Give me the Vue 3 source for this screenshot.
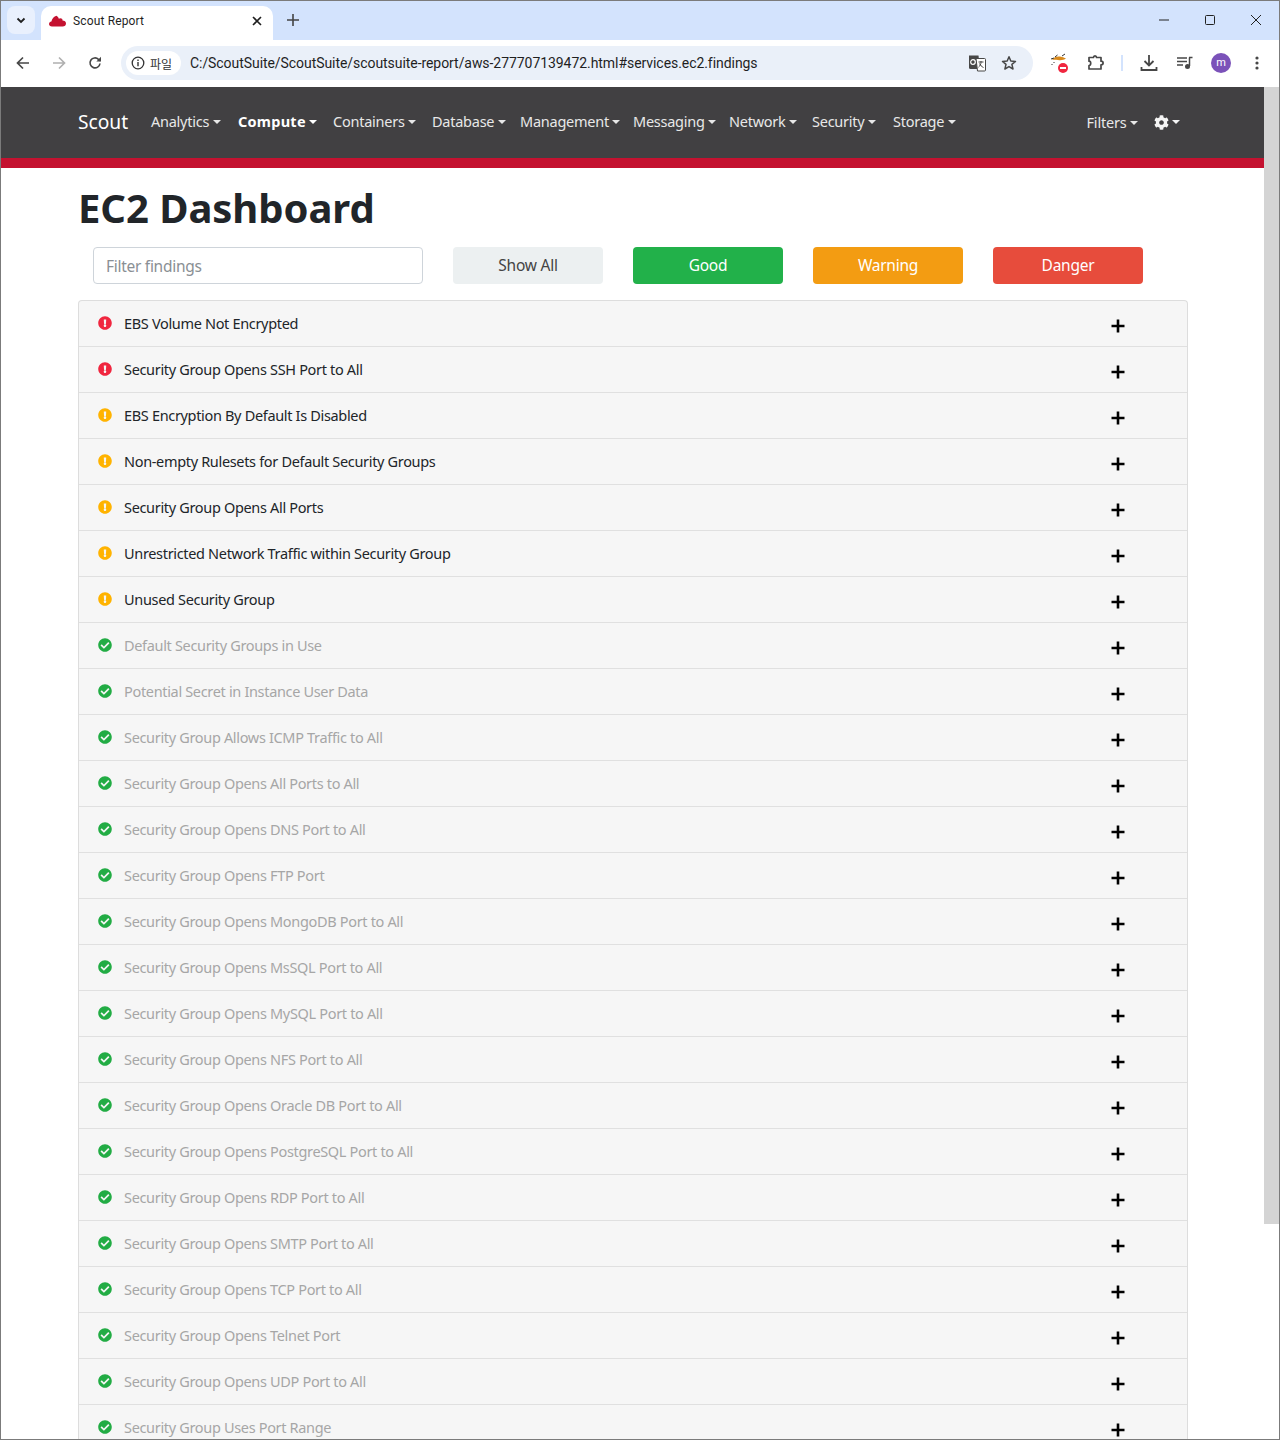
<script setup>
const menus = [
  { label: 'Analytics' }, { label: 'Compute', active: true }, { label: 'Containers' }, { label: 'Database' },
  { label: 'Management' }, { label: 'Messaging' }, { label: 'Network' }, { label: 'Security' }, { label: 'Storage' },
]
const danger = ['EBS Volume Not Encrypted', 'Security Group Opens SSH Port to All']
const warning = ['EBS Encryption By Default Is Disabled', 'Non-empty Rulesets for Default Security Groups', 'Security Group Opens All Ports', 'Unrestricted Network Traffic within Security Group', 'Unused Security Group']
const good = ['Default Security Groups in Use', 'Potential Secret in Instance User Data', 'Security Group Allows ICMP Traffic to All', 'Security Group Opens All Ports to All', 'Security Group Opens DNS Port to All', 'Security Group Opens FTP Port', 'Security Group Opens MongoDB Port to All', 'Security Group Opens MsSQL Port to All', 'Security Group Opens MySQL Port to All', 'Security Group Opens NFS Port to All', 'Security Group Opens Oracle DB Port to All', 'Security Group Opens PostgreSQL Port to All', 'Security Group Opens RDP Port to All', 'Security Group Opens SMTP Port to All', 'Security Group Opens TCP Port to All', 'Security Group Opens Telnet Port', 'Security Group Opens UDP Port to All', 'Security Group Uses Port Range']
const findings = [
  ...danger.map(t => ({ t, s: 'danger' })),
  ...warning.map(t => ({ t, s: 'warning' })),
  ...good.map(t => ({ t, s: 'good' })),
]
const exclaim = 'M504 256c0 136.997-111.043 248-248 248S8 392.997 8 256C8 119.083 119.043 8 256 8s248 111.083 248 248zm-248 50c-25.405 0-46 20.595-46 46s20.595 46 46 46 46-20.595 46-46-20.595-46-46-46zm-43.673-165.346l7.418 136c.347 6.364 5.609 11.346 11.982 11.346h48.546c6.373 0 11.635-4.982 11.982-11.346l7.418-136c.375-6.874-5.098-12.654-11.982-12.654h-63.383c-6.884 0-12.356 5.78-11.981 12.654z'
const check = 'M504 256c0 136.967-111.033 248-248 248S8 392.967 8 256 119.033 8 256 8s248 111.033 248 248zM227.314 387.314l184-184c6.248-6.248 6.248-16.379 0-22.627l-22.627-22.627c-6.248-6.249-16.379-6.249-22.628 0L216 308.118l-70.059-70.059c-6.248-6.248-16.379-6.248-22.628 0l-22.627 22.627c-6.248 6.248-6.248 16.379 0 22.627l104 104c6.249 6.249 16.379 6.249 22.628.001z'
const cog = 'M487.4 315.7l-42.6-24.6c4.3-23.2 4.3-47 0-70.2l42.6-24.6c4.9-2.8 7.1-8.6 5.5-14-11.1-35.6-30-67.8-54.7-94.6-3.8-4.1-10-5.1-14.8-2.3L380.8 110c-17.9-15.4-38.5-27.3-60.8-35.1V25.8c0-5.6-3.9-10.5-9.4-11.7-36.7-8.2-74.3-7.8-109.2 0-5.5 1.2-9.4 6.1-9.4 11.7V75c-22.2 7.9-42.8 19.8-60.8 35.1L88.7 85.5c-4.9-2.8-11-1.9-14.8 2.3-24.7 26.7-43.6 58.9-54.7 94.6-1.7 5.4.6 11.2 5.5 14L67.3 221c-4.3 23.2-4.3 47 0 70.2l-42.6 24.6c-4.9 2.8-7.1 8.6-5.5 14 11.1 35.6 30 67.8 54.7 94.6 3.8 4.1 10 5.1 14.8 2.3l42.6-24.6c17.9 15.4 38.5 27.3 60.8 35.1v49.2c0 5.6 3.9 10.5 9.4 11.7 36.7 8.2 74.3 7.8 109.2 0 5.5-1.2 9.4-6.1 9.4-11.7v-49.2c22.2-7.9 42.8-19.8 60.8-35.1l42.6 24.6c4.9 2.8 11 1.9 14.8-2.3 24.7-26.7 43.6-58.9 54.7-94.6 1.5-5.5-.7-11.3-5.6-14.1zM256 336c-44.1 0-80-35.9-80-80s35.9-80 80-80 80 35.9 80 80-35.9 80-80 80z'
</script>

<template>
  <div class="window">
    <header class="tabstrip">
      <button class="tabmenu">
        <svg width="12" height="12" viewBox="0 0 12 12"><path d="M2.5 4.5 6 8l3.5-3.500" fill="none" stroke="#1f1f1f" stroke-width="1.800"/></svg>
      </button>
      <div class="tab">
        <svg class="favicon" width="17" height="12" viewBox="0 0 17 12"><path d="M3 11.500C1.200 11.500 0 10.400 0 9c0-1.400 1-2.400 2.400-2.600C3 3.800 5 1.500 7.500.8c1.500 1 2 1.700 2.300 3 .8-.8 2.200-.8 3.200 0 .4.500.6 1 .5 1.600 2 0 3.500 1.200 3.500 3 0 1.700-1.400 3.100-3.300 3.100z" fill="#c41230"/></svg>
        <span class="tabtitle">Scout Report</span>
        <svg width="10" height="10" viewBox="0 0 10 10"><path d="M1 1l8 8M9 1l-8 8" stroke="#1f1f1f" stroke-width="1.600"/></svg>
      </div>
      <svg class="newtab" width="12" height="12" viewBox="0 0 12 12"><path d="M6 0v12M0 6h12" stroke="#444" stroke-width="1.600"/></svg>
      <div class="wincontrols">
        <svg width="10" height="10" viewBox="0 0 10 10"><path d="M0 5h10" stroke="#222" stroke-width="1"/></svg>
        <svg width="10" height="10" viewBox="0 0 10 10"><rect x=".5" y=".5" width="9" height="9" rx="1" fill="none" stroke="#222"/></svg>
        <svg width="10" height="10" viewBox="0 0 10 10"><path d="M0 0l10 10M10 0L0 10" stroke="#222" stroke-width="1"/></svg>
      </div>
    </header>

    <div class="toolbar">
      <svg class="tb-back" width="14" height="14" viewBox="0 0 14 14"><path d="M13 7H2M7 1.500 1.500 7 7 12.500" fill="none" stroke="#474747" stroke-width="1.700"/></svg>
      <svg class="tb-fwd" width="14" height="14" viewBox="0 0 14 14"><path d="M1 7h11M7 1.500 12.500 7 7 12.500" fill="none" stroke="#b0b0b0" stroke-width="1.700"/></svg>
      <svg class="tb-reload" width="14" height="14" viewBox="0 0 14 14"><path d="M12 7.500A5 5 0 1 1 10.500 3.300L12.500 5" fill="none" stroke="#474747" stroke-width="1.600"/><path d="M13 .8V5.500H8.300z" fill="#474747"/></svg>
      <div class="omnibox">
        <div class="chip">
          <svg width="14" height="14" viewBox="0 0 14 14"><circle cx="7" cy="7" r="5.800" fill="none" stroke="#333" stroke-width="1.300"/><path d="M7 6v4.200M7 3.600v1.400" stroke="#333" stroke-width="1.400"/></svg>
          <span>파일</span>
        </div>
        <span class="url">C:/ScoutSuite/ScoutSuite/scoutsuite-report/aws-277707139472.html#services.ec2.findings</span>
        <svg class="translate" width="18" height="18" viewBox="0 0 18 18"><path d="M1 1.500h9.500L12 15H2.500A1.500 1.500 0 0 1 1 13.500z" fill="#474747"/><path d="M8 4.500h8.500a1 1 0 0 1 1 1V16a1 1 0 0 1-1 1H9.500z" fill="#fff" stroke="#474747"/><circle cx="5" cy="8" r="2.300" fill="none" stroke="#fff" stroke-width="1.200"/><path d="M10.500 8h5M13 7v1.200c0 2-1 3.800-2.500 5M11.500 9.500c.8 1.700 2 3 4 4" fill="none" stroke="#474747"/></svg>
        <svg class="star" width="16" height="16" viewBox="0 0 16 16"><path d="M8 1.700 9.800 6l4.700.4-3.600 3 1.100 4.600L8 11.600 3.900 14 5 9.400l-3.500-3L6.200 6z" fill="none" stroke="#474747" stroke-width="1.500" stroke-linejoin="round"/></svg>
      </div>
      <div class="ext">
        <svg class="ext-bird" width="20" height="22" viewBox="0 0 20 22"><path d="M2 8c2-3 5-4 8-3.500 2 .3 4 1 6 2-2 1.500-5 2-8 1.500C6 7.800 4 7.500 2 8z" fill="#d98a1c"/><path d="M5 5 7.500 3M12 4l3-2M1 7l3-1M4 10v1M2 12v1" stroke="#333" stroke-width="1"/><circle cx="13" cy="16" r="5" fill="#f0263f"/><path d="M10 16h6" stroke="#fff" stroke-width="2"/></svg>
        <svg class="ext-puzzle" width="18" height="16" viewBox="0 0 18 16"><path d="M2 2.500h4.500c0-2.200 3-2.200 3 0h4.500v3.700c2.800 0 2.800 3.600 0 3.600v4.200H2v-3.500c2.300 0 2.300-4.300 0-4.300z" fill="none" stroke="#474747" stroke-width="1.700" stroke-linejoin="round"/></svg>
        <span class="sep"></span>
        <svg class="ext-dl" width="18" height="18" viewBox="0 0 18 18"><path d="M9 1v10M4.500 7 9 11.500 13.500 7M1.500 13v3h15v-3" fill="none" stroke="#474747" stroke-width="1.800"/></svg>
        <svg class="ext-media" width="16" height="14" viewBox="0 0 16 14"><path d="M0 2h10M0 5.500h10M0 9h6" stroke="#474747" stroke-width="1.500"/><path d="M12 1.500h3.500M12.500 1.500V10" stroke="#474747" stroke-width="1.500" fill="none"/><circle cx="10.500" cy="10.500" r="2.500" fill="#474747"/></svg>
        <span class="avatar">m</span>
        <svg class="ext-more" width="4" height="14" viewBox="0 0 4 14"><circle cx="2" cy="2" r="1.600" fill="#474747"/><circle cx="2" cy="7" r="1.600" fill="#474747"/><circle cx="2" cy="12" r="1.600" fill="#474747"/></svg>
      </div>
    </div>

    <div class="viewport">
      <div class="page">
        <nav class="navbar">
          <span class="brand">Scout</span>
          <ul class="menu">
            <li v-for="m in menus" :key="m.label" :class="{ active: m.active }">{{ m.label }}<i class="caret"></i></li>
          </ul>
          <div class="navright">
            <span class="filters">Filters<i class="caret"></i></span>
            <span class="settings">
              <svg width="15" height="15" viewBox="0 0 512 512"><path :d="cog" fill="#f5f5f5"/></svg><i class="caret"></i>
            </span>
          </div>
        </nav>
        <div class="accent"></div>
        <main class="content">
          <h1>EC2 Dashboard</h1>
          <div class="filterrow">
            <input class="filter" type="text" placeholder="Filter findings" />
            <button class="btn all">Show All</button>
            <button class="btn good">Good</button>
            <button class="btn warning">Warning</button>
            <button class="btn danger">Danger</button>
          </div>
          <ul class="list">
            <li v-for="f in findings" :key="f.t" class="row" :class="f.s">
              <svg class="status" width="14" height="14" viewBox="0 0 512 512"><path :d="f.s === 'good' ? check : exclaim" fill="currentColor"/></svg>
              <span class="name">{{ f.t }}</span>
              <svg class="plus" width="14" height="14" viewBox="0 0 14 14"><path d="M7 .5v13M.5 7h13" stroke="#000" stroke-width="2.600"/></svg>
            </li>
          </ul>
        </main>
      </div>
      <div class="scrollbar"><div class="thumb"></div></div>
    </div>
  </div>
</template>

<style>
html, body { margin: 0; padding: 0; overflow: hidden; }
</style>

<style scoped>
.window {
  width: 1280px; height: 1440px; box-sizing: border-box; border: 1px solid #7b7b7b;
  display: flex; flex-direction: column; overflow: hidden; background: #fff;
  font-family: "Noto Sans", sans-serif;
}
.tabstrip { height: 39px; flex: none; background: #d3e3fd; display: flex; align-items: flex-start; position: relative; }
.tabmenu { width: 28px; height: 28px; margin: 5px 0 0 6px; border: 0; padding: 0; border-radius: 8px; background: #e9f0fd; display: flex; align-items: center; justify-content: center; }
.tab { width: 232px; box-sizing: border-box; height: 34px; margin: 5px 0 0 6px; background: #fff; border-radius: 10px 10px 0 0; display: flex; align-items: center; padding: 0 11px 4px 8px; }
.favicon { margin-right: 7px; }
.tabtitle { flex: 1; font: 12px "Roboto", sans-serif; letter-spacing: .15px; color: #1f1f1f; }
.newtab { margin: 13px 0 0 14px; }
.wincontrols { margin-left: auto; display: flex; gap: 36px; padding: 14px 18px 0 0; }
.toolbar { height: 47px; flex: none; background: #fff; border-radius: 10px 10px 0 0; display: flex; align-items: center; box-sizing: border-box; padding-bottom: 1px; }
.tb-back { margin-left: 15px; }
.tb-fwd { margin-left: 22px; }
.tb-reload { margin-left: 22px; }
.omnibox { width: 912px; height: 34px; margin-left: 19px; border-radius: 17px; background: #eaf0f9; display: flex; align-items: center; box-sizing: border-box; padding: 0 16px 0 5px; }
.chip { height: 24px; width: 55px; box-sizing: border-box; background: #fff; border-radius: 12px; display: flex; align-items: center; gap: 5px; padding-left: 5px; font: 12px "Noto Sans CJK KR", sans-serif; color: #333; }
.url { margin-left: 9px; flex: 1; font: 14px "Roboto", sans-serif; letter-spacing: -.06px; color: #1f1f1f; white-space: nowrap; }
.star { margin-left: 15px; }
.ext { display: flex; align-items: center; }
.ext-bird { margin-left: 17px; }
.ext-puzzle { margin-left: 17px; }
.sep { width: 2px; height: 16px; background: #d3e3fd; margin-left: 16px; }
.ext-dl { margin-left: 17px; }
.ext-media { margin-left: 19px; }
.avatar { width: 20px; height: 20px; margin-left: 18px; border-radius: 50%; background: #7b52b9; color: #fff; font: 11px/20px "Roboto", sans-serif; text-align: center; }
.ext-more { margin-left: 24px; }
.viewport { flex: 1; min-height: 0; display: flex; }
.page { flex: 1; min-width: 0; overflow: hidden; }
.scrollbar { width: 15px; flex: none; background: #fff; }
.thumb { height: 1137px; background: #d4d4d4; }
.navbar { height: 71px; background: #414042; display: flex; align-items: center; padding: 0 84px 1px 77px; box-sizing: border-box; color: #e8e8e8; }
.brand { font-size: 19.200px; color: #fff; width: 73px; flex: none; margin-bottom: 1px; }
.menu { list-style: none; margin: 0 0 2px; padding: 0; display: grid; grid-template-columns: 87px 95px 99px 88px 113px 96px 83px 81px 62px; font-size: 14.500px; letter-spacing: -.25px; white-space: nowrap; }
.menu .active { font-weight: 700; color: #fff; letter-spacing: .25px; }
.caret { display: inline-block; margin-left: 3.500px; vertical-align: 3px; border-top: 4px solid currentColor; border-left: 4px solid transparent; border-right: 4px solid transparent; }
.navright { margin-left: auto; display: flex; align-items: center; gap: 16px; font-size: 14.500px; letter-spacing: -.2px; }
.settings { display: flex; align-items: center; color: #f5f5f5; }
.settings .caret { margin-left: 3px; vertical-align: 0; }
.accent { height: 10px; background: #c41230; }
.content { padding: 0 0 0 77px; width: 1110px; }
h1 { margin: 13px 0 0; font-size: 40px; line-height: 54px; font-weight: 700; color: #212529; letter-spacing: -.05px; }
.filterrow { display: flex; gap: 30px; padding-left: 15px; margin-top: 12px; }
.filter { width: 330px; height: 37px; box-sizing: border-box; border: 1px solid #ced4da; border-radius: 4px; padding: 0 12px; font: 15.500px "Noto Sans", sans-serif; letter-spacing: -.28px; background: #fff; outline: none; }
.filter::placeholder { color: #8a8f94; opacity: 1; }
.btn { width: 150px; height: 37px; box-sizing: border-box; border: 0; border-radius: 4px; font: 15.500px "Noto Sans", sans-serif; letter-spacing: -.25px; color: #fff; padding: 0 0 1px; }
.btn.all { background: #ecf0f1; color: #444; }
.btn.good { background: #22b14a; }
.btn.warning { background: #f39c12; }
.btn.danger { background: #e74c3c; }
.list { list-style: none; margin: 16px 0 0; padding: 0; border: 1px solid #ddd; border-bottom: 0; border-radius: 4px 4px 0 0; background: #f6f6f6; width: 1108px; }
.row { height: 46px; box-sizing: border-box; border-bottom: 1px solid #e0e0e0; display: flex; align-items: center; padding: 0 62.500px 0 19px; font-size: 14.500px; letter-spacing: -.33px; color: #212529; }
.row .status { flex: none; margin-bottom: 1px; }
.row.danger .status { color: #f0263f; }
.row.warning .status { color: #ffb300; }
.row.good .status { color: #22ac44; }
.row.good .name { color: #a6a6a6; }
.name { flex: 1; margin-left: 12px; margin-bottom: 2px; }
.plus { flex: none; margin-top: 4px; }
</style>
